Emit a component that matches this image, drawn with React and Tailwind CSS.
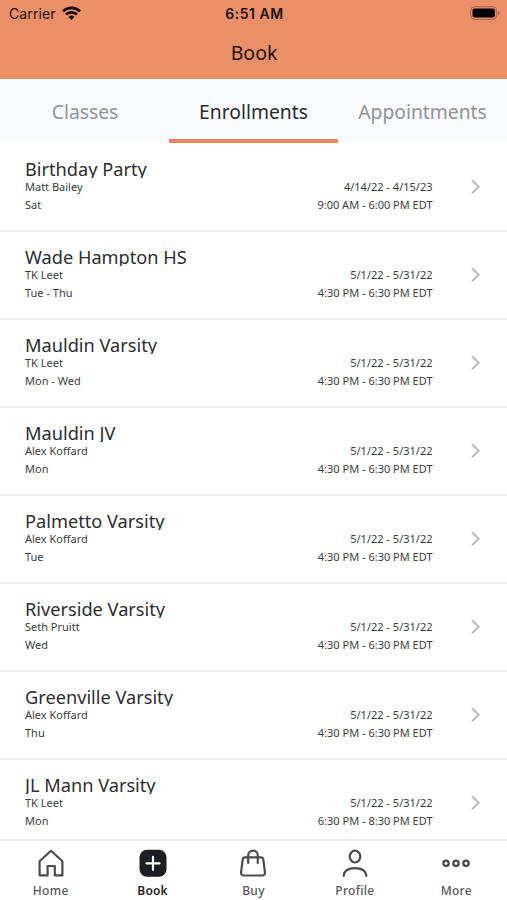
import React from "react";

const rows = [
  ["Birthday Party", "Matt Bailey", "Sat", "4/14/22 - 4/15/23", "9:00 AM - 6:00 PM EDT"],
  ["Wade Hampton HS", "TK Leet", "Tue - Thu", "5/1/22 - 5/31/22", "4:30 PM - 6:30 PM EDT"],
  ["Mauldin Varsity", "TK Leet", "Mon - Wed", "5/1/22 - 5/31/22", "4:30 PM - 6:30 PM EDT"],
  ["Mauldin JV", "Alex Koffard", "Mon", "5/1/22 - 5/31/22", "4:30 PM - 6:30 PM EDT"],
  ["Palmetto Varsity", "Alex Koffard", "Tue", "5/1/22 - 5/31/22", "4:30 PM - 6:30 PM EDT"],
  ["Riverside Varsity", "Seth Pruitt", "Wed", "5/1/22 - 5/31/22", "4:30 PM - 6:30 PM EDT"],
  ["Greenville Varsity", "Alex Koffard", "Thu", "5/1/22 - 5/31/22", "4:30 PM - 6:30 PM EDT"],
  ["JL Mann Varsity", "TK Leet", "Mon", "5/1/22 - 5/31/22", "6:30 PM - 8:30 PM EDT"],
];

function Row({ row }) {
  const [title, teacher, days, dates, times] = row;
  return (
    <li className="flex h-[88px] shrink-0 items-start border-b-2 border-[#eeeeee] pl-[25px] pr-[25px]">
      <div className="flex-1 pt-[14px]">
        <h2 className="h-[20px] overflow-hidden text-[18.2px] leading-[25px] text-[#2d2d2f]">
          <span className="-mt-[1px] block">{title}</span>
        </h2>
        <div className="flex justify-between text-[11px] leading-[17.6px] text-[#3c3c3e]">
          <div>
            <p>{teacher}</p>
            <p>{days}</p>
          </div>
          <div className="-mr-[0.5px] text-right">
            <p>{dates}</p>
            <p>{times}</p>
          </div>
        </div>
      </div>
      <svg className="ml-[38px] mt-[35px] h-4 w-[12px]" viewBox="0 0 12 16" fill="none" stroke="#bdbdc0" strokeWidth="2">
        <path d="M2 1.2 8.8 7.7 2 14.2" />
      </svg>
    </li>
  );
}

const HomeIcon = () => (
  <svg className="h-[30px] w-[30px]" viewBox="0 0 30 30" fill="none" stroke="#4a4c51" strokeWidth="2.2" strokeLinejoin="round">
    <path d="M3.6 13.2 15 2.8l11.4 10.4V27.400h-7.600v-9.400h-7.200v9.400h-8z" />
  </svg>
);
const BookIcon = () => (
  <svg className="h-[30px] w-[30px]" viewBox="0 0 30 30">
    <rect x="1.5" y="1.8" width="27" height="27" rx="7.5" fill="#1d1e21" />
    <path d="M15 8.8v13M8.5 15.3h13" stroke="#fff" strokeWidth="2.2" strokeLinecap="round" />
  </svg>
);
const BuyIcon = () => (
  <svg className="h-[30px] w-[30px]" viewBox="0 0 30 30" fill="none" stroke="#4a4c51" strokeWidth="2.2" strokeLinecap="round" strokeLinejoin="round">
    <path d="M7 9.4h16q2 0 2.3 2l1.6 12.8q.3 3.3-2.7 3.3H5.800q-3 0-2.700-3.300l1.600-12.800q.3-2 2.300-2z" />
    <path d="M10.2 15V7.6a4.8 5 0 0 1 9.6 0V15" />
  </svg>
);
const ProfileIcon = () => (
  <svg className="h-[30px] w-[30px]" viewBox="0 0 30 30" fill="none" stroke="#4a4c51" strokeWidth="2.2" strokeLinecap="round">
    <ellipse cx="15" cy="8.6" rx="5.3" ry="5.9" />
    <path d="M3.7 27.8c.4-5.400 3.800-7.600 11.300-7.600s10.900 2.200 11.300 7.600" />
  </svg>
);
const MoreIcon = () => (
  <svg className="h-[30px] w-[30px]" viewBox="0 0 30 30" fill="none" stroke="#4a4c51" strokeWidth="2.3">
    <circle cx="5" cy="15.3" r="2.7" />
    <circle cx="15" cy="15.3" r="2.7" />
    <circle cx="25" cy="15.3" r="2.7" />
  </svg>
);

const nav = [
  ["Home", HomeIcon],
  ["Book", BookIcon],
  ["Buy", BuyIcon],
  ["Profile", ProfileIcon],
  ["More", MoreIcon],
];

export default function App() {
  return (
    <div className="flex h-[900px] w-[507px] flex-col overflow-hidden bg-white font-['Noto_Sans',sans-serif]">
      <header className="flex h-[79px] shrink-0 flex-col bg-[#ea8f68] text-[#1c110d]">
        <div className="grid h-[27px] grid-cols-3 items-center pl-[9px] pr-[7px] font-['Inter',sans-serif] text-[14px]">
          <div className="flex items-center gap-[6px]">
            <span className="tracking-[0.1px]">Carrier</span>
            <svg className="-mt-[2px] h-[14px] w-[19px]" viewBox="0 0 19 14" fill="none" stroke="#100a08" strokeWidth="2.7">
              <path d="M1 5.2a12.3 12.3 0 0 1 17 0" />
              <path d="M4 8.5a8 8 0 0 1 11 0" />
              <path d="M6.6 10.9a4.2 4.2 0 0 1 5.8 0L9.5 13.9z" fill="#100a08" stroke="none" />
            </svg>
          </div>
          <span className="text-center font-semibold tracking-[0.5px]">6:51 AM</span>
          <svg className="-mt-[1px] h-[14px] w-[30px] justify-self-end" viewBox="0 0 30 14">
            <rect x=".7" y=".7" width="26" height="12.6" rx="4" fill="none" stroke="#a4644a" />
            <rect x="2.5" y="2.5" width="22.4" height="9" rx="2.2" fill="#000" />
            <path d="M28 5v4q1.7-.7 1.7-2T28 5" fill="#a4644a" />
          </svg>
        </div>
        <h1 className="pl-[1px] text-center text-[19.5px] leading-[52px]">Book</h1>
      </header>
      <nav className="grid h-[64px] shrink-0 grid-cols-3 text-center text-[19.3px] leading-[66px] text-[#929398]">
        <div className="h-[63px] bg-[#f8fafc] pl-[1px]">Classes</div>
        <div className="h-[64px] border-b-4 border-[#ea8760] bg-[#f8fafc] text-[#2a2b2f]">Enrollments</div>
        <div className="h-[63px] bg-[#f8fafc]">Appointments</div>
      </nav>
      <ul className="flex min-h-0 flex-1 flex-col overflow-hidden pt-[1px]">
        {rows.map((row) => (
          <Row key={row[0]} row={row} />
        ))}
      </ul>
      <footer className="grid h-[61px] shrink-0 grid-cols-5 border-t-2 border-[#ececec] bg-white">
        {nav.map(([label, Icon]) => (
          <div key={label} className={label === "Book" ? "flex flex-col items-center pl-[1px] pt-[7px]" : "flex flex-col items-center pt-[7px]"}>
            <Icon />
            <span className={label === "Book" ? "mt-[4px] text-[12px] font-semibold leading-[18px] tracking-[0.2px] text-[#242529]" : "mt-[4px] text-[12px] font-medium leading-[18px] tracking-[0.3px] text-[#55575c]"}>{label}</span>
          </div>
        ))}
      </footer>
    </div>
  );
}
